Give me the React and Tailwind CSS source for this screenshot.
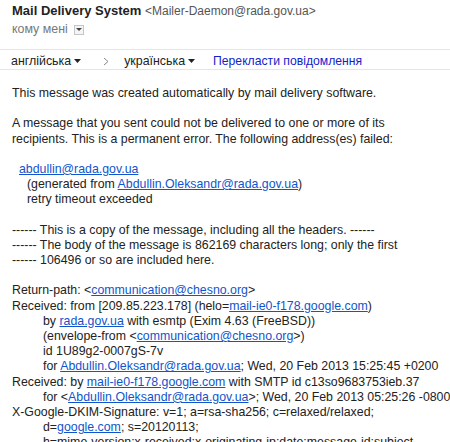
import React from "react";

const L = ({ children }) => (
  <a className="text-[#1155cc] underline">{children}</a>
);

const Tri = () => (
  <svg width="7" height="4" viewBox="0 0 7 4" className="inline-block ml-[3px]">
    <path d="M0 0 L7 0 L3.5 4 Z" fill="#222" />
  </svg>
);

const Line = ({ indent = 0, children }) => (
  <div className="whitespace-nowrap h-[15.2px] leading-[15.2px]" style={indent ? { paddingLeft: indent } : undefined}>
    {children}
  </div>
);

const Blank = () => <div className="h-[15.2px]" />;

export default function App() {
  return (
    <div className="w-[450px] h-[442px] overflow-hidden bg-white text-[#222] font-['Liberation_Sans',Arial,sans-serif]">
      <div className="pl-[12px] pt-[2px] text-[13px]">
        <div className="h-[17px] leading-[17px] whitespace-nowrap">
          <span className="font-bold text-[#222]">Mail Delivery System</span>{" "}
          <span className="text-[12px] text-[#555]">&lt;Mailer-Daemon@rada.gov.ua&gt;</span>
        </div>
        <div className="h-[17px] leading-[17px] mt-[2px] flex items-center text-[12.4px] text-[#777] whitespace-nowrap">
          <span>кому мені</span>
          <span className="ml-[6px] w-[10px] h-[10px] border border-[#c6c6c6] bg-[#f5f5f5] flex items-center justify-center">
            <svg width="6" height="4" viewBox="0 0 6 4">
              <path d="M0 0 L6 0 L3 3 Z" fill="#444" />
            </svg>
          </span>
        </div>
      </div>
      <div className="mt-[11px] border-t border-b border-[#e5e5e5] h-[21px] flex items-center whitespace-nowrap pl-[11px] pt-[3px] text-[12.4px]">
        <span className="flex items-center">англійська<Tri /></span>
        <span className="ml-[22px] flex items-center">
          <svg width="6" height="9" viewBox="0 0 6 9">
            <path d="M1 1 L5 4.5 L1 8" fill="none" stroke="#888" strokeWidth="1" />
          </svg>
        </span>
        <span className="ml-[15px] flex items-center">українська<Tri /></span>
        <span className="ml-[18px] text-[#1122cc] text-[12.2px]">Перекласти повідомлення</span>
      </div>
      <div className="pl-[12px] pt-[16px] text-[12.35px]">
        <Line>This message was created automatically by mail delivery software.</Line>
        <Blank />
        <Line>A message that you sent could not be delivered to one or more of its</Line>
        <Line>recipients. This is a permanent error. The following address(es) failed:</Line>
        <Blank />
        <Line indent={7}><L>abdullin@rada.gov.ua</L></Line>
        <Line indent={15}>(generated from <L>Abdullin.Oleksandr@rada.gov.ua</L>)</Line>
        <Line indent={15}>retry timeout exceeded</Line>
        <Blank />
        <Line>------ This is a copy of the message, including all the headers. ------</Line>
        <Line>------ The body of the message is 862169 characters long; only the first</Line>
        <Line>------ 106496 or so are included here.</Line>
        <Blank />
        <Line>Return-path: &lt;<L>communication@chesno.org</L>&gt;</Line>
        <Line>Received: from [209.85.223.178] (helo=<L>mail-ie0-f178.google.com</L>)</Line>
        <Line indent={31}>by <L>rada.gov.ua</L> with esmtp (Exim 4.63 (FreeBSD))</Line>
        <Line indent={31}>(envelope-from &lt;<L>communication@chesno.org</L>&gt;)</Line>
        <Line indent={31}>id 1U89g2-0007gS-7v</Line>
        <Line indent={31}>for <L>Abdullin.Oleksandr@rada.gov.ua</L>; Wed, 20 Feb 2013 15:25:45 +0200</Line>
        <Line>Received: by <L>mail-ie0-f178.google.com</L> with SMTP id c13so9683753ieb.37</Line>
        <Line indent={31}>for &lt;<L>Abdullin.Oleksandr@rada.gov.ua</L>&gt;; Wed, 20 Feb 2013 05:25:26 -0800</Line>
        <Line>X-Google-DKIM-Signature: v=1; a=rsa-sha256; c=relaxed/relaxed;</Line>
        <Line indent={31}>d=<L>google.com</L>; s=20120113;</Line>
        <Line indent={31}>h=mime-version:x-received:x-originating-ip:date:message-id:subject</Line>
      </div>
    </div>
  );
}
